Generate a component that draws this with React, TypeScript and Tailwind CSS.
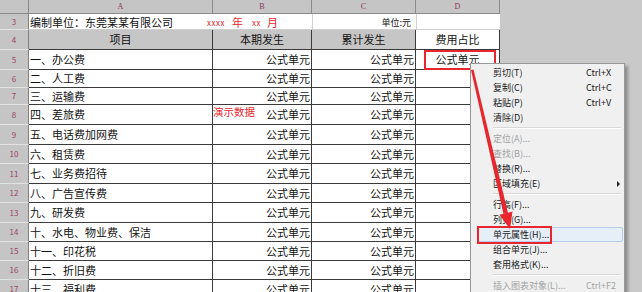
import React from 'react';

const font = { fontFamily: '"Noto Sans CJK SC", "Noto Sans", sans-serif' };

const rows = [
    { n: 5, label: '一、办公费', h: 'h-[20px]' },
    { n: 6, label: '二、人工费', h: 'h-[18px]' },
    { n: 7, label: '三、运输费', h: 'h-[17px]' },
    { n: 8, label: '四、差旅费', h: 'h-[20px]' },
    { n: 9, label: '五、电话费加网费', h: 'h-[20px]' },
    { n: 10, label: '六、租赁费', h: 'h-[19px]' },
    { n: 11, label: '七、业务费招待', h: 'h-[20px]' },
    { n: 12, label: '八、广告宣传费', h: 'h-[19px]' },
    { n: 13, label: '九、研发费', h: 'h-[20px]' },
    { n: 14, label: '十、水电、物业费、保洁', h: 'h-[19px]' },
    { n: 15, label: '十一、印花税', h: 'h-[19px]' },
    { n: 16, label: '十二、折旧费', h: 'h-[19px]' },
    { n: 17, label: '十三、福利费', h: 'h-[19px]' },
];

type Item =
    | { sep: true }
    | { sep?: false; label: string; key?: string; disabled?: boolean; sub?: boolean; hot?: boolean };

const menu: Item[] = [
    { label: '剪切(T)', key: 'Ctrl+X' },
    { label: '复制(C)', key: 'Ctrl+C' },
    { label: '粘贴(P)', key: 'Ctrl+V' },
    { label: '清除(D)' },
    { sep: true },
    { label: '定位(A)...', disabled: true },
    { label: '查找(B)...', disabled: true },
    { label: '替换(R)...' },
    { label: '区域填充(E)', sub: true },
    { sep: true },
    { label: '行高(F)...' },
    { label: '列宽(G)...' },
    { label: '单元属性(H)...', hot: true },
    { label: '组合单元(J)...' },
    { label: '套用格式(K)...' },
    { sep: true },
    { label: '插入图表对象(L)...', key: 'Ctrl+F2', disabled: true },
];

function RowHead({ n }: { n: number | string }) {
    return (
        <div className="w-[29px] shrink-0 flex items-center justify-center bg-[#c5c5c5] border-r border-b border-r-[#808080] border-b-[#e2e2e2] text-[8px] text-[#9a4466]">
            {n}
        </div>
    );
}

function ContextMenu() {
    return (
        <div className="absolute left-[470px] top-[63px] w-[155px] h-[240px] bg-[#f0f0f0] border border-[#979797] pt-[1px] shadow-[3px_3px_3px_rgba(0,0,0,0.3)] text-[9px] text-[#1a1a1a]">
            {menu.map((item, i) =>
                item.sep ? (
                    <div key={i} className="h-[6px] flex flex-col justify-center pl-[22px] pr-[3px]">
                        <div className="h-px bg-[#d8d8d8]" />
                        <div className="h-px bg-white" />
                    </div>
                ) : (
                    <div key={i} className="relative h-[15px] flex items-center">
                        {item.hot && (
                            <div className="absolute left-[6px] right-[1px] top-0 bottom-0 rounded-[2px] border border-[#b4cdea] bg-[#e6eef8]" />
                        )}
                        <span
                            className={
                                'relative pl-[22px] w-[115px] ' +
                                (item.disabled ? 'text-[#a3a3a3]' : '')
                            }
                        >
                            {item.label}
                        </span>
                        {item.key && (
                            <span className={'relative ' + (item.disabled ? 'text-[#a3a3a3]' : '')}>
                                {item.key}
                            </span>
                        )}
                        {item.sub && (
                            <span className="relative ml-[31px] w-0 h-0 border-y-[3px] border-y-transparent border-l-[3px] border-l-[#222]" />
                        )}
                    </div>
                )
            )}
        </div>
    );
}

export default function App() {
    return (
        <div className="relative w-[642px] h-[292px] overflow-hidden bg-[#c9c9c9]" style={font}>
            {/* column headers */}
            <div className="flex h-[14px]">
                <div className="w-[29px] bg-[#c5c5c5] border-r border-b border-[#8a8a8a]" />
                {[
                    ['A', 'w-[184px]'],
                    ['B', 'w-[99px]'],
                    ['C', 'w-[104px]'],
                    ['D', 'w-[84px]'],
                ].map(([c, w]) => (
                    <div
                        key={c}
                        className={w + ' flex items-center justify-center bg-[#c5c5c5] border-r border-b border-[#8a8a8a] text-[8px] text-[#8a3a5e]'}
                        style={{ fontFamily: '"Liberation Serif", serif' }}
                    >
                        {c}
                    </div>
                ))}
            </div>

            {/* row 3 */}
            <div className="flex h-[16px]">
                <RowHead n={3} />
                <div className="w-[283px] bg-white flex items-end text-[11px] leading-[14px] text-[#111] border-b border-[#d0d0d0]">
                    <span className="pl-[1px]">编制单位：东莞某某有限公司</span>
                    <span className="ml-[34px] text-[#e8262e] flex items-end">
                        <span className="text-[8px] tracking-[0.5px] leading-[12px]">xxxx</span>
                        <span className="ml-[7px]">年</span>
                        <span className="ml-[9px] text-[8px] tracking-[0.5px] leading-[12px]">xx</span>
                        <span className="ml-[6px]">月</span>
                    </span>
                </div>
                <div className="w-[104px] bg-white flex items-end justify-end pr-[5px] text-[9px] leading-[13px] text-[#111] border-l border-b border-[#d0d0d0]">
                    单位:元
                </div>
                <div className="w-[84px] bg-white border-l border-b border-[#d0d0d0]" />
            </div>

            {/* row 4 */}
            <div className="flex h-[20px] text-[11px] text-[#111]">
                <RowHead n={4} />
                <div className="w-[184px] bg-[#c6c6c6] border-r border-b border-[#3a3a3a] flex items-center justify-center">项目</div>
                <div className="w-[99px] bg-[#c6c6c6] border-r border-b border-[#3a3a3a] flex items-center justify-center">本期发生</div>
                <div className="w-[104px] bg-[#c6c6c6] border-r border-b border-[#3a3a3a] flex items-center justify-center">累计发生</div>
                <div className="w-[84px] bg-white border-r border-b border-[#3a3a3a] flex items-center justify-center">费用占比</div>
            </div>

            {/* data rows */}
            {rows.map((r) => (
                <div key={r.n} className={'flex text-[11px] text-[#111] ' + r.h}>
                    <RowHead n={r.n} />
                    <div className="w-[184px] bg-white border-r border-b border-[#3a3a3a] flex items-center pl-[1px] whitespace-nowrap">
                        {r.label}
                    </div>
                    <div className="w-[99px] bg-white border-r border-b border-[#3a3a3a] flex items-center justify-between pr-[1px]">
                        {r.n === 8 ? (
                            <span className="self-start text-[10.5px] leading-[13px] text-[#e8262e]">演示数据</span>
                        ) : (
                            <span />
                        )}
                        <span>公式单元</span>
                    </div>
                    <div className="w-[104px] bg-white border-r border-b border-[#3a3a3a] flex items-center justify-end pr-[1px]">
                        公式单元
                    </div>
                    <div className="w-[84px] bg-white border-r border-b border-[#3a3a3a] flex items-center justify-center">
                        {r.n === 5 ? '公式单元' : ''}
                    </div>
                </div>
            ))}

            {/* red highlight on D5 */}
            <div className="absolute left-[424px] top-[50px] w-[72px] h-[20px] border-2 border-[#e8262e]" />

            <ContextMenu />

            {/* red highlight on menu item */}
            <div className="absolute left-[477px] top-[226px] w-[75px] h-[18px] border-2 border-[#e8262e]" />

            {/* arrow */}
            <svg className="absolute left-0 top-0 pointer-events-none" width="642" height="292">
                <polygon points="471,70 473.5,69.6 508,213 503.5,214" fill="#e8262e" />
                <polygon points="510,229 512.5,211.5 499.5,214.8" fill="#e8262e" />
            </svg>
        </div>
    );
}
